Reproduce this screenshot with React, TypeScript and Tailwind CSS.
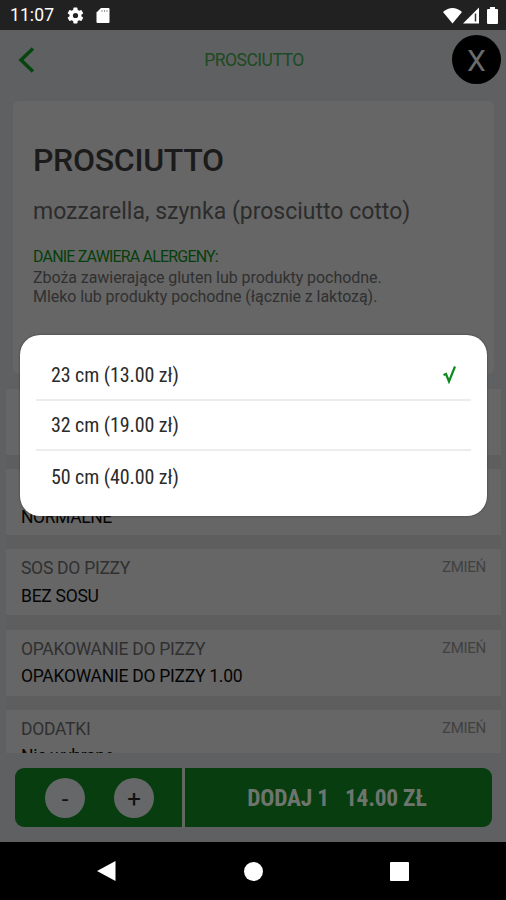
import React from 'react';

const sizes = [
  { label: '23 cm (13.00 zł)', selected: true },
  { label: '32 cm (19.00 zł)', selected: false },
  { label: '50 cm (40.00 zł)', selected: false },
];

const options = [
  { title: 'SOS DO PIZZY', value: 'BEZ SOSU' },
  { title: 'OPAKOWANIE DO PIZZY', value: 'OPAKOWANIE DO PIZZY 1.00' },
  { title: 'DODATKI', value: 'Nie wybrano' },
];

const StatusBar: React.FC = () => (
  <div className="flex h-[30px] shrink-0 items-center bg-[#212121] pl-[10px] pr-[8px] text-white">
    <span className="w-[44px] whitespace-nowrap pt-[2px] text-[17.5px] leading-none tracking-[0.1px]">11:07</span>
    <svg className="ml-[12px]" width="19" height="19" viewBox="0 0 24 24" fill="currentColor">
      <path d="M19.4 13a7.5 7.5 0 0 0 0-2l2.1-1.6a.5.5 0 0 0 .1-.7l-2-3.4a.5.5 0 0 0-.6-.2l-2.5 1a7.3 7.3 0 0 0-1.7-1l-.4-2.6a.5.5 0 0 0-.5-.5h-4a.5.5 0 0 0-.5.5L9 5.1a7.3 7.3 0 0 0-1.7 1l-2.5-1a.5.5 0 0 0-.6.2l-2 3.4a.5.5 0 0 0 .1.7L4.5 11a7.5 7.5 0 0 0 0 2l-2.2 1.6a.5.5 0 0 0-.1.7l2 3.4c.1.2.4.3.6.2l2.5-1a7.3 7.3 0 0 0 1.7 1l.4 2.6c0 .3.2.5.5.5h4c.3 0 .5-.2.5-.5l.4-2.6a7.3 7.3 0 0 0 1.7-1l2.5 1c.2.1.5 0 .6-.2l2-3.4a.5.5 0 0 0-.1-.7zM12 15.3a3.3 3.3 0 1 1 0-6.6 3.3 3.3 0 0 1 0 6.6z" />
    </svg>
    <svg className="ml-[11px]" width="14" height="17" viewBox="0 0 14 17">
      <path d="M5 1h7.5q1 0 1 1v13q0 1-1 1h-11q-1 0-1-1V5.5z" fill="#fff" />
      <path d="M6 3v2M8.5 3v2M11 3v2" stroke="#999" strokeWidth="1" />
    </svg>
    <svg className="ml-auto" width="19" height="17" viewBox="0 0 19 17">
      <path d="M9.5 16.5L0 5q9.500-8 19 0z" fill="#fff" />
    </svg>
    <svg className="ml-[1px]" width="16" height="17" viewBox="0 0 16 17">
      <path d="M16 .5V16.5H0z" fill="#fff" />
      <path d="M12.5 6.5v8" stroke="#333" strokeWidth="1.500" />
    </svg>
    <svg className="ml-[8px]" width="11" height="17" viewBox="0 0 11 17">
      <path d="M3 0h5v2h2q1 0 1 1v13q0 1-1 1H1q-1 0-1-1V3q0-1 1-1h2z" fill="#fff" />
    </svg>
  </div>
);

const Header: React.FC = () => (
  <header className="grid h-[71px] shrink-0 grid-cols-[50px_1fr_50px] items-start pl-[18px] pr-[4px] pt-[5px]">
    <div className="flex h-[50px] items-center">
      <svg width="17" height="26" viewBox="0 0 17 26" fill="none" stroke="#07450f" strokeWidth="3.500">
        <path d="M15 1.5L3 13l12 11.5" />
      </svg>
    </div>
    <h1 className="flex h-[50px] items-center justify-center pr-[12px] text-[17.5px] tracking-[-0.5px] text-[#1b4b21]">
      PROSCIUTTO
    </h1>
    <button className="flex h-[49px] w-[49px] items-center justify-center rounded-full bg-black text-[30px] text-[#6b6b6b]">
      <span className="pt-[2px] leading-none">X</span>
    </button>
  </header>
);

const ProductCard: React.FC = () => (
  <section className="ml-[13px] mr-[12px] h-[273px] shrink-0 rounded-[6px] bg-[#666] px-[20px] pt-[39px]">
    <h2 className="whitespace-nowrap text-[32px] font-medium leading-[40px] tracking-[-0.3px] text-[#1b1b1b]">
      PROSCIUTTO
    </h2>
    <p className="mt-[17px] whitespace-nowrap text-[23px] leading-[30px] text-[#2c2c2c]">
      mozzarella, szynka (prosciutto cotto)
    </p>
    <p className="mt-[20px] whitespace-nowrap text-[16px] leading-[20px] tracking-[-0.82px] text-[#053f0b]">
      DANIE ZAWIERA ALERGENY:
    </p>
    <p className="mt-[2px] whitespace-nowrap text-[16px] leading-[18.5px] tracking-[-0.06px] text-[#303030]">
      Zboża zawierające gluten lub produkty pochodne.
      <br />
      Mleko lub produkty pochodne (łącznie z laktozą).
    </p>
  </section>
);

const OptionList: React.FC = () => (
  <section className="ml-[6px] mr-[5px] mt-[15px] flex min-h-0 flex-1 flex-col gap-[14.2px] overflow-hidden bg-[#5e5e5e]">
    <div className="h-[66px] shrink-0 bg-[#666]" />
    <div className="flex h-[66px] shrink-0 items-end bg-[#666] px-[15px] pb-[7px]">
      <p className="text-[17.5px] leading-[22px] tracking-[-0.4px] text-[#050505]">NORMALNE</p>
    </div>
    {options.map((option) => (
      <div key={option.title} className="flex h-[66px] shrink-0 justify-between bg-[#666] px-[15px] pt-[8px]">
        <div className="whitespace-nowrap text-[17.5px] leading-[22px] tracking-[-0.27px]">
          <p className="text-[#303030]">{option.title}</p>
          <p className="mt-[5.5px] text-[#050505]">{option.value}</p>
        </div>
        <span className="text-[15px] leading-[20px] tracking-[-0.3px] text-[#414141]">ZMIEŃ</span>
      </div>
    ))}
  </section>
);

const OrderBar: React.FC = () => (
  <div className="flex h-[89px] shrink-0 items-start bg-[#5f6062] pl-[15px] pr-[14px] pt-[15px]">
    <div className="flex h-[59px] flex-1 overflow-hidden rounded-[9px] bg-[#083e0f]">
      <div className="flex w-[167px] items-center gap-[29px] pl-[30px]">
        <button className="flex h-[40px] w-[40px] items-center justify-center rounded-full bg-[#666769] pt-[3px] text-[24px] leading-none text-[#111]">
          -
        </button>
        <button className="flex h-[40px] w-[40px] items-center justify-center rounded-full bg-[#666769] pt-[3px] text-[24px] leading-none text-[#111]">
          +
        </button>
      </div>
      <div className="w-[3px] bg-[#5f6861]" />
      <div className="flex flex-1 items-center justify-center gap-[16px] whitespace-nowrap pr-[3px] pt-[2px] font-['Roboto_Condensed',Roboto,sans-serif] text-[23.5px] font-bold tracking-[-0.25px] text-[#6d756e] [font-stretch:75%]">
        <span>DODAJ 1</span>
        <span>14.00 ZŁ</span>
      </div>
    </div>
  </div>
);

const NavigationBar: React.FC = () => (
  <nav className="grid h-[58px] shrink-0 grid-cols-[146px_1fr_146px] items-center bg-black px-[34px]">
    <svg className="mr-[2px] justify-self-center" width="19" height="22" viewBox="0 0 19 22">
      <path d="M18.5 1v20L0 11z" fill="#fff" />
    </svg>
    <div className="h-[19px] w-[19px] justify-self-center rounded-full bg-white" />
    <div className="h-[19px] w-[19px] justify-self-center rounded-[1px] bg-white" />
  </nav>
);

const SizeDialog: React.FC = () => (
  <div
    role="dialog"
    className="absolute left-[20px] top-[334.5px] h-[181px] w-[467px] rounded-[20px] bg-white px-[16px] pt-[16px] shadow-[0_0_2px_#333]"
  >
    {sizes.map((size) => (
      <div
        key={size.label}
        className="flex h-[50.3px] items-center justify-between border-b-2 border-[#ececec] px-[15px] pt-px text-[20px] text-[#2b2b2b] last:border-b-0"
      >
        <span className="whitespace-nowrap font-['Roboto_Condensed',Roboto,sans-serif] tracking-[-0.08px] [font-stretch:75%]">
          {size.label}
        </span>
        {size.selected && (
          <svg width="13" height="18" viewBox="0 0 13 18" fill="none" stroke="#0b8a1d" strokeWidth="2.2">
            <path d="M.5 9l2.5-1L6 15.5 12 .5" />
          </svg>
        )}
      </div>
    ))}
  </div>
);

const App: React.FC = () => {
  return (
    <main className="relative flex h-[900px] w-[506px] flex-col overflow-hidden bg-[#5f6062] font-['Roboto',sans-serif]">
      <StatusBar />
      <Header />
      <ProductCard />
      <OptionList />
      <OrderBar />
      <NavigationBar />
      <SizeDialog />
    </main>
  );
};

export default App;
